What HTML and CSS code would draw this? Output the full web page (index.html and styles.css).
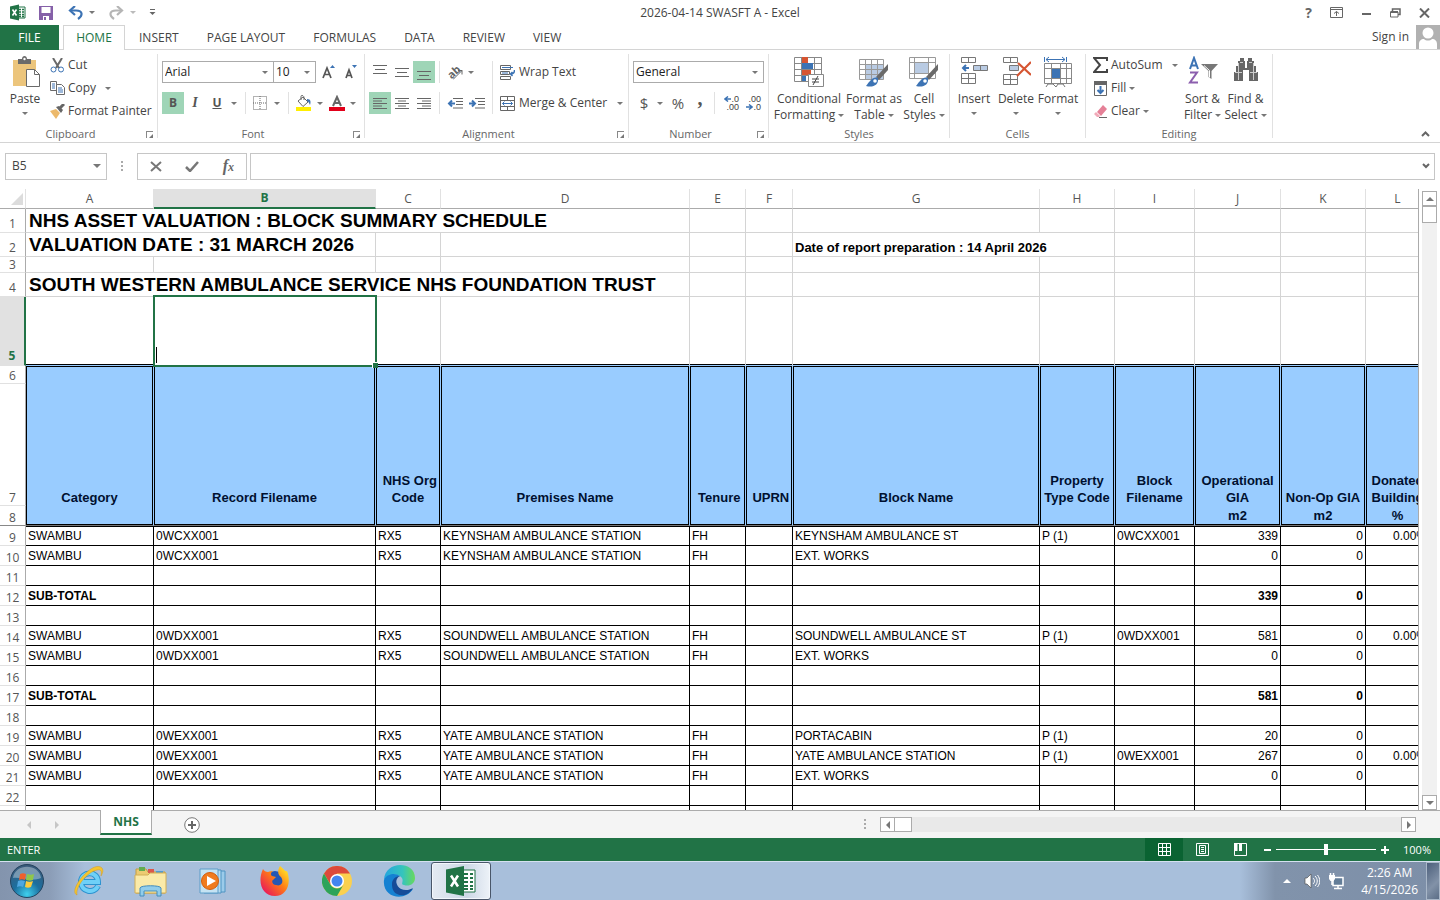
FILE: index.html
```html
<!DOCTYPE html>
<html lang="en">
<head>
<meta charset="utf-8">
<title>2026-04-14 SWASFT A - Excel</title>
<link rel="stylesheet" href="styles.css">
</head>
<body>
<header class="titlebar">
  <div class="quick">
    <svg width="18" height="17" viewBox="0 0 18 17"><path d="M8 3h8v11H8z" fill="#fff" stroke="#217346"/><path d="M10 5.500h2m1 0h2M10 8h2m1 0h2M10 10.500h2m1 0h2M10 12.500h2m1 0h2" stroke="#217346" stroke-width="1.300"/><path d="M1 2.500 10 .5v16L1 14.500z" fill="#217346"/><path d="m3.500 5.500 4 6m0-6-4 6" stroke="#fff" stroke-width="1.600"/></svg>
    <button class="tool" aria-label="Save"><svg width="16" height="16" viewBox="0 0 16 16"><path d="M1 1h14v14H1z" fill="#8560a8"/><path d="M3.500 2h9v6h-9zM5 11h6v4H5z" fill="#fff"/><path d="M6 12h2v3H6z" fill="#8560a8"/></svg></button>
    <button class="tool undo" aria-label="Undo"><svg width="17" height="14" viewBox="0 0 17 14"><path d="M3 4.500h5c7 0 7 5 2 8.500" fill="none" stroke="#3c73b4" stroke-width="2.200"/><path d="M7 0 2 4.500l5 4.500" fill="none" stroke="#3c73b4" stroke-width="2.200"/></svg><i class="caret"></i></button>
    <button class="tool redo" aria-label="Redo"><svg width="17" height="14" viewBox="0 0 17 14"><path d="M13 4.500H8c-7 0-7 5-2 8.500" fill="none" stroke="#b5b5b5" stroke-width="2.200"/><path d="m9 0 5 4.500L9 9" fill="none" stroke="#b5b5b5" stroke-width="2.200"/></svg><i class="caret pale"></i></button>
    <button class="tool more" aria-label="Customize Quick Access Toolbar"><svg width="7" height="7" viewBox="0 0 7 7"><path d="M1 .5h5" stroke="#666"/><path d="M.5 3h6l-3 3z" fill="#666"/></svg></button>
  </div>
  <h1>2026-04-14 SWASFT A - Excel</h1>
  <div class="winctl">
    <button class="tool help" aria-label="Help">?</button>
    <button class="tool" aria-label="Ribbon Display Options"><svg width="13" height="11" viewBox="0 0 13 11"><path d="M.5.5h12v10H.5zM1 2.500h11M6.500 9V4.500M4 6.500l2.500-2 2.500 2" fill="none" stroke="#666"/></svg></button>
    <button class="tool" aria-label="Minimize"><svg width="11" height="11" viewBox="0 0 11 11"><path d="M1 7h9" stroke="#666" stroke-width="2"/></svg></button>
    <button class="tool" aria-label="Restore"><svg width="11" height="10" viewBox="0 0 11 10"><path d="M2.500 3V1h7.500v5.500H8" fill="none" stroke="#666" stroke-width="1.500"/><path d="M.5 4h7.500v5H.5z" fill="#fff" stroke="#666"/><path d="M.5 4h7.500" stroke="#666" stroke-width="2"/></svg></button>
    <button class="tool" aria-label="Close"><svg width="11" height="10" viewBox="0 0 11 10"><path d="m1 .5 9 9m0-9-9 9" stroke="#666" stroke-width="2"/></svg></button>
  </div>
</header>

<nav class="tabs">
  <button class="file">FILE</button>
  <button class="current">HOME</button>
  <button>INSERT</button>
  <button>PAGE LAYOUT</button>
  <button>FORMULAS</button>
  <button>DATA</button>
  <button>REVIEW</button>
  <button>VIEW</button>
  <a class="signin" href="#">Sign in <svg width="24" height="24" viewBox="0 0 24 24"><path d="M0 0h24v24H0z" fill="#b1b1b1"/><circle cx="12" cy="8" r="5.500" fill="#fff"/><path d="M3 24v-5c0-3 2-5 5-5 2 2 6 2 8 0 3 0 5 2 5 5v5z" fill="#fff"/></svg></a>
</nav>

<section class="ribbon">
  <div class="group clipboard">
    <div class="body">
      <button class="big paste"><svg width="30" height="32" viewBox="0 0 30 32"><path d="M3 4h23v26H3z" fill="#ecc57c"/><path d="M8 3h4c0-4 5-4 5 0h4v5H8z" fill="#6a6a6a"/><circle cx="14.500" cy="3" r="1.200" fill="#fff"/><path d="M17.500 13.500h8l5 5v12h-13z" fill="#fff" stroke="#6a6a6a" transform="translate(-1 0)"/><path d="M24.500 13.500v5h5" fill="none" stroke="#6a6a6a"/></svg><span>Paste</span><i class="caret"></i></button>
      <div class="stack">
        <button class="small"><svg width="15" height="15" viewBox="0 0 15 15"><path d="m3 0 6 10M12 0 6 10" stroke="#6a6a6a" stroke-width="2"/><circle cx="3.500" cy="11.500" r="2.500" fill="none" stroke="#3c73b4"/><circle cx="11" cy="11.500" r="2.500" fill="none" stroke="#3c73b4"/></svg>Cut</button>
        <button class="small"><svg width="15" height="14" viewBox="0 0 15 14"><path d="M.5.5h6v9h-6z" fill="#fff" stroke="#6a6a6a"/><path d="M6.500 3.500h5l3 3v7h-8z" fill="#fff" stroke="#6a6a6a"/><path d="M2 3h3M2 5h3M2 7h3m3 0h4M8 9h5m-5 2h5" stroke="#3c73b4"/></svg>Copy<i class="caret far"></i></button>
        <button class="small"><svg width="15" height="15" viewBox="0 0 15 15"><path d="m0 7 6-2 4 4-4 6z" fill="#ecb96b"/><path d="m6 3 3-1 4 4-2 3z" fill="#666"/><path d="m10 4 4-4" stroke="#666" stroke-width="3"/></svg>Format Painter</button>
      </div>
    </div>
    <div class="label">Clipboard<i class="launch"></i></div>
  </div>

  <div class="group font">
    <div class="body rows">
      <div class="line">
        <span class="combo face"><select aria-label="Font"><option>Arial</option></select><i class="caret"></i></span><span class="combo size"><select aria-label="Font size"><option>10</option></select><i class="caret"></i></span>
        <button class="tool" aria-label="Increase font size"><svg width="14" height="14" viewBox="0 0 14 14"><path d="m1 13 4-10 4 10M2.500 9.500h5" fill="none" stroke="#555" stroke-width="1.700"/><path d="m8 3 2.500-3L13 3z" fill="#3c73b4"/></svg></button>
        <button class="tool shrink" aria-label="Decrease font size"><svg width="13" height="14" viewBox="0 0 13 14"><path d="m1 13 3-8 3 8M2 10.500h4" fill="none" stroke="#555" stroke-width="1.700"/><path d="m7 0 2.500 3L12 0z" fill="#3c73b4"/></svg></button>
      </div>
      <div class="line">
        <button class="sq on bold">B</button><button class="sq ital">I</button><button class="sq under">U</button><i class="caret"></i><i class="bar"></i>
        <button class="tool borders" aria-label="Borders"><svg width="14" height="14" viewBox="0 0 14 14"><path d="M.5.5h13v13H.5zM7 0v14M0 7h14" fill="none" stroke="#666" stroke-dasharray="1 1"/></svg></button><i class="caret"></i><i class="bar"></i>
        <button class="tool fillc" aria-label="Fill color"><svg width="17" height="17" viewBox="0 0 17 17"><path d="M1 12h15v4H1z" fill="#ffee00"/><path d="m3 6 5-4 5 5-5 4.500z" fill="#fff" stroke="#666"/><path d="M6 5V1.500c0-2 3-1 3 1V5" fill="none" stroke="#666"/><path d="M12 4c4 0 4 3 3 6-1-2-1-3-3-4z" fill="#3c73b4"/></svg></button><i class="caret"></i>
        <button class="tool fontc" aria-label="Font color"><svg width="16" height="17" viewBox="0 0 16 17"><path d="M0 12h16v4H0z" fill="#e2001a"/><path d="m4 11 4-9 4 9M5 8h6" fill="none" stroke="#666" stroke-width="2"/></svg></button><i class="caret"></i>
      </div>
    </div>
    <div class="label">Font<i class="launch"></i></div>
  </div>

  <div class="group align">
    <div class="body cols">
      <div class="rows">
        <div class="line">
          <button class="sq" aria-label="Top align"><svg width="14" height="15" viewBox="0 0 14 15"><path d="M0 .5h14M2 4.500h10M0 8.500h14" stroke="#666"/></svg></button><button class="sq" aria-label="Middle align"><svg width="14" height="15" viewBox="0 0 14 15"><path d="M0 3.500h14M2 7.500h10M0 11.500h14" stroke="#666"/></svg></button><button class="sq on" aria-label="Bottom align"><svg width="14" height="15" viewBox="0 0 14 15"><path d="M0 6.500h14M2 10.500h10M0 14.500h14" stroke="#666"/></svg></button><i class="bar"></i><button class="tool orient" aria-label="Orientation"><span class="ab">ab</span><svg width="10" height="10" viewBox="0 0 10 10"><path d="M0 9.500 9 .5m-4 0h4v4" fill="none" stroke="#666"/></svg></button><i class="caret"></i>
        </div>
        <div class="line">
          <button class="sq on" aria-label="Align left"><svg width="14" height="11" viewBox="0 0 14 11"><path d="M0 .5h14M0 3h9M0 5.500h14M0 8h9M0 10.500h14" stroke="#666"/></svg></button><button class="sq" aria-label="Center"><svg width="14" height="11" viewBox="0 0 14 11"><path d="M0 .5h14M3 3h8M0 5.500h14M3 8h8M0 10.500h14" stroke="#666"/></svg></button><button class="sq" aria-label="Align right"><svg width="14" height="11" viewBox="0 0 14 11"><path d="M0 .5h14M5 3h9M0 5.500h14M5 8h9M0 10.500h14" stroke="#666"/></svg></button><i class="bar"></i><button class="sq" aria-label="Decrease indent"><svg width="16" height="11" viewBox="0 0 16 11"><path d="M6 .5h10M9 3.500h7M9 6.500h7M6 10h10" stroke="#666"/><path d="M8 5.500H2m3-3-3 3 3 3" fill="none" stroke="#3c73b4" stroke-width="2"/></svg></button><button class="sq" aria-label="Increase indent"><svg width="16" height="11" viewBox="0 0 16 11"><path d="M6 .5h10M9 3.500h7M9 6.500h7M6 10h10" stroke="#666"/><path d="M0 5.500h6m-3-3 3 3-3 3" fill="none" stroke="#3c73b4" stroke-width="2"/></svg></button>
        </div>
      </div>
      <div class="rows wraps">
        <div class="line"><button class="small"><svg width="15" height="15" viewBox="0 0 15 15"><path d="M.5.500h10v4H.5zM.5 6.500h9v3H.5zM.5 11.500h10v3H.5z" fill="#fff" stroke="#666"/><path d="M2 2.500h11M2 8h6" stroke="#3c73b4"/><path d="M14.500 5c0 3-1 4-4 4m2-2-2 2 2 2" fill="none" stroke="#3c73b4" stroke-width="1.500"/></svg>Wrap Text</button></div>
        <div class="line"><button class="small"><svg width="15" height="15" viewBox="0 0 15 15"><path d="M.5.500h14v14H.5zM.5 4.500h14M.5 10.500h14M7.500 0v4.500m0 6v4.500" fill="#fff" stroke="#666"/><path d="M2.500 7.500h10m-8-2-2 2 2 2m6-4 2 2-2 2" fill="none" stroke="#3c73b4"/></svg>Merge &amp; Center<i class="caret far"></i></button></div>
      </div>
    </div>
    <div class="label">Alignment<i class="launch"></i></div>
  </div>

  <div class="group number">
    <div class="body rows">
      <div class="line"><span class="combo general"><select aria-label="Number format"><option>General</option></select><i class="caret"></i></span></div>
      <div class="line"><button class="sq sym">$</button><i class="caret"></i><button class="sq sym">%</button><button class="sq comma">,</button><i class="bar"></i><button class="sq dec" aria-label="Increase decimal"><span><svg width="7" height="6" viewBox="0 0 7 6"><path d="M1 3h6M4 .5 1 3l3 2.500" fill="none" stroke="#3c73b4" stroke-width="1.500"/></svg>.0</span><span>.00</span></button><button class="sq dec" aria-label="Decrease decimal"><span>.00</span><span><svg width="7" height="6" viewBox="0 0 7 6"><path d="M0 3h6M3 .5 6 3 3 5.500" fill="none" stroke="#3c73b4" stroke-width="1.500"/></svg>.0</span></button></div>
    </div>
    <div class="label">Number<i class="launch"></i></div>
  </div>

  <div class="group styles">
    <div class="body">
      <button class="big w1"><svg width="30" height="32" viewBox="0 0 30 32"><path d="M.5 1.500h27v24H.5zM.5 7.500h27M.5 13.500h27M.5 19.500h27M7.500 1v24M20.500 1v24" fill="#fff" stroke="#888"/><path d="M8 1h6v6H8zM8 14h9v5H8z" fill="#d65532"/><path d="M8 7h11v6H8zM8 20h4v5H8z" fill="#3c73b4"/><path d="M14.500 18.500h15v12h-15z" fill="#fff" stroke="#888"/><path d="M18 23h7m-7 3h7m-1-6-5 9" stroke="#444"/></svg><span>Conditional<br>Formatting<i class="caret"></i></span></button>
      <button class="big w2"><svg width="30" height="32" viewBox="0 0 30 32"><path d="M.5 3.500h24v20H.5z" fill="#fff"/><path d="M7 9h18v14H7z" fill="#b9cbe3"/><path d="M.5 3.500h24v20H.5zM.5 8.500h24M.5 13.500h24M.5 18.500h24M6.500 3v20M12.500 3v20M18.500 3v20" fill="none" stroke="#999"/><path d="M29 8v6l-9 10-3-3z" fill="#6a6a6a"/><path d="M19 22c-5-2-8 3-12 8 7 2 13-1 12-8z" fill="#3c73b4"/><circle cx="16" cy="25" r="1.800" fill="#fff"/></svg><span>Format as<br>Table<i class="caret"></i></span></button>
      <button class="big w3"><svg width="30" height="32" viewBox="0 0 30 32"><path d="M.5 1.500h26v21H.5zM.5 6.500h26M.5 17.500h26M5.500 1v21M19.500 1v21" fill="#fff" stroke="#999"/><path d="M6 7h13v10H6z" fill="#b9cbe3"/><path d="M29 8v6l-9 10-3-3z" fill="#6a6a6a"/><path d="M19 22c-5-2-8 3-12 8 7 2 13-1 12-8z" fill="#3c73b4"/><circle cx="16" cy="25" r="1.800" fill="#fff"/></svg><span>Cell<br>Styles<i class="caret"></i></span></button>
    </div>
    <div class="label">Styles</div>
  </div>

  <div class="group cells">
    <div class="body">
      <button class="big"><svg width="30" height="32" viewBox="0 0 30 32"><path d="M2.500 1.500h14v5h-14zM9.500 1v5M2.500 17.500h14v10h-14zM9.500 17v10M2.500 22.500h14" fill="none" stroke="#777"/><path d="M14.500 9.500h14v5h-14zM21.500 9v5" fill="#b9cbe3" stroke="#777"/><path d="M10 12H4m3-3-3 3 3 3" fill="none" stroke="#3c73b4" stroke-width="2"/></svg><span>Insert</span><i class="caret"></i></button>
      <button class="big"><svg width="30" height="32" viewBox="0 0 30 32"><path d="M2.500 1.500h14v5h-14zM9.500 1v5M2.500 18.500h14v10h-14zM9.500 18v10M2.500 23.500h14" fill="none" stroke="#777"/><path d="M8.500 9.500h9v5h-9z" fill="#b9cbe3" stroke="#777"/><path d="m17 7 13 12M30 6 16 20" stroke="#d65532" stroke-width="2.200"/></svg><span>Delete</span><i class="caret"></i></button>
      <button class="big"><svg width="30" height="32" viewBox="0 0 30 32"><path d="M1.500 7.500h27v20h-27zM1.500 12.500h27M1.500 22.500h27M8.500 7v20M17.500 7v20M23.500 7v20" fill="#fff" stroke="#888"/><path d="M9 13h8v9H9z" fill="#3c73b4"/><path d="M1.500 1v5M23.500 1v5M3 3.500h19M6 1 3 3.500 6 6m13-5 3 2.500L19 6" fill="none" stroke="#3c73b4"/><path d="m3 31 2-3h5l3 3 2-3h5l2 3" fill="#fff" stroke="#777"/></svg><span>Format</span><i class="caret"></i></button>
    </div>
    <div class="label">Cells</div>
  </div>

  <div class="group editing">
    <div class="body">
      <div class="stack">
        <button class="small"><svg width="15" height="16" viewBox="0 0 15 16"><path d="M14 4V1H1l6 7-6 7h13v-3" fill="none" stroke="#444" stroke-width="2"/></svg>AutoSum<i class="caret far"></i></button>
        <button class="small"><svg width="15" height="15" viewBox="0 0 15 15"><path d="M1.500.5h12v14h-12z" fill="#fff" stroke="#666"/><path d="M1 0h13v4H1z" fill="#666"/><path d="M7.500 5v7m-3-3 3 3 3-3" fill="none" stroke="#3c73b4" stroke-width="2"/></svg>Fill<i class="caret"></i></button>
        <button class="small"><svg width="15" height="13" viewBox="0 0 15 13"><path d="m4 7 6-7 4 4-6 7z" fill="#e58097"/><path d="m1 9 2-2 4 4-1 1H4z" fill="#f1a9b8"/><path d="M6 12.500h8" stroke="#666"/></svg>Clear<i class="caret"></i></button>
      </div>
      <button class="big w4"><svg width="30" height="32" viewBox="0 0 30 32"><path d="m2 13 4-11 4 11M3.500 9.500h5" fill="none" stroke="#3c73b4" stroke-width="2"/><path d="M2 16.500h7l-7 10h8" fill="none" stroke="#8c5fae" stroke-width="2"/><path d="M13 8h17l-6.500 7v8l-3-2v-6z" fill="#777"/><path d="m16 9.500 5.500 5v7" fill="none" stroke="#fff"/></svg><span>Sort &amp;<br>Filter<i class="caret"></i></span></button>
      <button class="big w4"><svg width="28" height="32" viewBox="0 0 28 32"><path d="M8 2h4v3h1v7h2V5h1V2h4v3h2v5h2v6h2v9h-9V14h-6v11H2v-9h2v-6h2V5h2z" fill="#666"/><path d="M6.500 7v17M21.500 7v17M8 6.500h3M17 6.500h3M3 16.500h7m8 0h7" stroke="#ccc"/></svg><span>Find &amp;<br>Select<i class="caret"></i></span></button>
    </div>
    <div class="label">Editing</div>
  </div>
  <button class="tool collapse" aria-label="Collapse the Ribbon"><svg width="9" height="6" viewBox="0 0 9 6"><path d="m1 5 3.500-3.500L8 5" fill="none" stroke="#666" stroke-width="2"/></svg></button>
</section>

<section class="formula">
  <span class="namebox"><input aria-label="Name box" value="B5"><i class="caret"></i></span>
  <i class="dots"></i>
  <div class="fx">
    <button class="tool" aria-label="Cancel"><svg width="12" height="11" viewBox="0 0 12 11"><path d="m1 1 10 9M11 1 1 10" stroke="#777" stroke-width="2"/></svg></button>
    <button class="tool" aria-label="Enter"><svg width="14" height="11" viewBox="0 0 14 11"><path d="m1 6 4 4 8-9" fill="none" stroke="#777" stroke-width="2.500"/></svg></button>
    <button class="tool fn" aria-label="Insert function">f<small>x</small></button>
  </div>
  <span class="entry"><input aria-label="Formula bar"><svg width="8" height="6" viewBox="0 0 8 6"><path d="m1 1 3 3 3-3" fill="none" stroke="#666" stroke-width="2"/></svg></span>
</section>

<main class="work">
  <div class="pane">
    <table class="sheet">
      <colgroup><col class="cn"><col class="ca"><col class="cb"><col class="cc"><col class="cd"><col class="ce"><col class="cf"><col class="cg"><col class="ch"><col class="ci"><col class="cj"><col class="ck"><col class="cl"></colgroup>
      <thead>
        <tr class="letters"><th class="corner"><svg width="12" height="12" viewBox="0 0 12 12"><path d="M12 0v12H0z" fill="#dcdcdc"/></svg></th><th>A</th><th class="sel">B</th><th>C</th><th>D</th><th>E</th><th>F</th><th>G</th><th>H</th><th>I</th><th>J</th><th>K</th><th>L</th></tr>
      </thead>
      <tbody class="top">
        <tr class="h24"><th>1</th><td colspan="4" class="title">NHS ASSET VALUATION : BLOCK SUMMARY SCHEDULE</td><td></td><td></td><td></td><td></td><td></td><td></td><td></td><td></td></tr>
        <tr class="h24"><th>2</th><td colspan="2" class="title">VALUATION DATE : 31 MARCH 2026</td><td></td><td></td><td></td><td></td><td colspan="2" class="prepared">Date of report preparation : 14 April 2026</td><td></td><td></td><td></td><td></td></tr>
        <tr class="h16"><th>3</th><td></td><td></td><td></td><td></td><td></td><td></td><td></td><td></td><td></td><td></td><td></td><td></td></tr>
        <tr class="h24"><th>4</th><td colspan="4" class="title">SOUTH WESTERN AMBULANCE SERVICE NHS FOUNDATION TRUST</td><td></td><td></td><td></td><td></td><td></td><td></td><td></td><td></td></tr>
        <tr class="h69"><th class="sel">5</th><td></td><td class="active"><div class="cursor"></div></td><td></td><td></td><td></td><td></td><td></td><td></td><td></td><td></td><td></td><td></td></tr>
      </tbody>
      <tbody class="heads">
        <tr class="h18"><th>6</th><td></td><td></td><td></td><td></td><td></td><td></td><td></td><td></td><td></td><td></td><td></td><td></td></tr>
        <tr class="h122"><th>7</th><td>Category</td><td>Record Filename</td><td>&nbsp;NHS Org Code</td><td>Premises Name</td><td>&nbsp;Tenure</td><td>&nbsp;UPRN</td><td>Block Name</td><td>Property Type&nbsp;Code</td><td>Block Filename</td><td>Operational GIA</td><td>Non-Op GIA</td><td>Donated Building</td></tr>
        <tr class="h20"><th>8</th><td></td><td></td><td></td><td></td><td></td><td></td><td></td><td></td><td></td><td>m2</td><td>m2</td><td>%</td></tr>
      </tbody>
      <tbody class="data">
        <tr><th>9</th><td>SWAMBU</td><td>0WCXX001</td><td>RX5</td><td>KEYNSHAM AMBULANCE STATION</td><td>FH</td><td></td><td>KEYNSHAM AMBULANCE ST</td><td>P (1)</td><td>0WCXX001</td><td>339</td><td>0</td><td>0.00%</td></tr>
        <tr><th>10</th><td>SWAMBU</td><td>0WCXX001</td><td>RX5</td><td>KEYNSHAM AMBULANCE STATION</td><td>FH</td><td></td><td>EXT. WORKS</td><td></td><td></td><td>0</td><td>0</td><td></td></tr>
        <tr><th>11</th><td></td><td></td><td></td><td></td><td></td><td></td><td></td><td></td><td></td><td></td><td></td><td></td></tr>
        <tr class="sub"><th>12</th><td>SUB-TOTAL</td><td></td><td></td><td></td><td></td><td></td><td></td><td></td><td></td><td>339</td><td>0</td><td></td></tr>
        <tr><th>13</th><td></td><td></td><td></td><td></td><td></td><td></td><td></td><td></td><td></td><td></td><td></td><td></td></tr>
        <tr><th>14</th><td>SWAMBU</td><td>0WDXX001</td><td>RX5</td><td>SOUNDWELL AMBULANCE STATION</td><td>FH</td><td></td><td>SOUNDWELL AMBULANCE ST</td><td>P (1)</td><td>0WDXX001</td><td>581</td><td>0</td><td>0.00%</td></tr>
        <tr><th>15</th><td>SWAMBU</td><td>0WDXX001</td><td>RX5</td><td>SOUNDWELL AMBULANCE STATION</td><td>FH</td><td></td><td>EXT. WORKS</td><td></td><td></td><td>0</td><td>0</td><td></td></tr>
        <tr><th>16</th><td></td><td></td><td></td><td></td><td></td><td></td><td></td><td></td><td></td><td></td><td></td><td></td></tr>
        <tr class="sub"><th>17</th><td>SUB-TOTAL</td><td></td><td></td><td></td><td></td><td></td><td></td><td></td><td></td><td>581</td><td>0</td><td></td></tr>
        <tr><th>18</th><td></td><td></td><td></td><td></td><td></td><td></td><td></td><td></td><td></td><td></td><td></td><td></td></tr>
        <tr><th>19</th><td>SWAMBU</td><td>0WEXX001</td><td>RX5</td><td>YATE AMBULANCE STATION</td><td>FH</td><td></td><td>PORTACABIN</td><td>P (1)</td><td></td><td>20</td><td>0</td><td></td></tr>
        <tr><th>20</th><td>SWAMBU</td><td>0WEXX001</td><td>RX5</td><td>YATE AMBULANCE STATION</td><td>FH</td><td></td><td>YATE AMBULANCE STATION</td><td>P (1)</td><td>0WEXX001</td><td>267</td><td>0</td><td>0.00%</td></tr>
        <tr><th>21</th><td>SWAMBU</td><td>0WEXX001</td><td>RX5</td><td>YATE AMBULANCE STATION</td><td>FH</td><td></td><td>EXT. WORKS</td><td></td><td></td><td>0</td><td>0</td><td></td></tr>
        <tr><th>22</th><td></td><td></td><td></td><td></td><td></td><td></td><td></td><td></td><td></td><td></td><td></td><td></td></tr>
        <tr><th></th><td></td><td></td><td></td><td></td><td></td><td></td><td></td><td></td><td></td><td></td><td></td><td></td></tr>
      </tbody>
    </table>
  </div>
  <div class="vscroll">
    <button class="arrow" aria-label="Scroll up"><i class="tri up"></i></button>
    <div class="thumb"></div>
    <button class="arrow end" aria-label="Scroll down"><i class="tri down"></i></button>
  </div>
</main>

<footer class="sheetbar">
  <button class="tool nav" aria-label="Previous sheet"><i class="tri left pale"></i></button>
  <button class="tool nav" aria-label="Next sheet"><i class="tri right pale"></i></button>
  <button class="sheettab">NHS</button>
  <button class="tool add" aria-label="New sheet"><svg width="16" height="16" viewBox="0 0 16 16"><circle cx="8" cy="8" r="7.300" fill="#fff" stroke="#777"/><path d="M8 4v8M4 8h8" stroke="#666" stroke-width="2"/></svg></button>
  <div class="hside"><i class="dots"></i>
    <div class="hscroll"><button class="arrow" aria-label="Scroll left"><i class="tri left"></i></button><div class="thumb"></div><button class="arrow end" aria-label="Scroll right"><i class="tri right"></i></button></div>
  </div>
</footer>

<div class="status">
  <span>ENTER</span>
  <div class="views">
    <button class="view on" aria-label="Normal"><svg width="13" height="13" viewBox="0 0 13 13"><path d="M.5.500h12v12H.5zM4.500 0v13M8.500 0v13M0 4.500h13M0 8.500h13" fill="none" stroke="#fff"/></svg></button>
    <button class="view" aria-label="Page Layout"><svg width="13" height="13" viewBox="0 0 13 13"><path d="M.5.500h12v12H.5zM3.500 2.500h6v8h-6zM5 4.500h3M5 6.500h3M5 8.500h3" fill="none" stroke="#fff"/></svg></button>
    <button class="view" aria-label="Page Break Preview"><svg width="13" height="13" viewBox="0 0 13 13"><path d="M.5.500h12v12H.5z" fill="none" stroke="#fff"/><path d="M0 0h3.500v8H0zM5 0h3v8H5z" fill="#fff"/></svg></button>
    <button class="zoom" aria-label="Zoom out"><svg width="7" height="8" viewBox="0 0 7 8"><path d="M0 4h7" stroke="#fff" stroke-width="2"/></svg></button>
    <input class="slider" type="range" min="0" max="100" value="50" aria-label="Zoom">
    <button class="zoom" aria-label="Zoom in"><svg width="8" height="8" viewBox="0 0 8 8"><path d="M0 4h8M4 0v8" stroke="#fff" stroke-width="2"/></svg></button>
    <span class="percent">100%</span>
  </div>
</div>

<div class="taskbar">
  <button class="start" aria-label="Start"><svg width="36" height="36" viewBox="0 0 36 36"><defs><radialGradient id="orb" cx=".5" cy=".9" r=".9"><stop offset="0" stop-color="#3fd0ee"/><stop offset=".45" stop-color="#1c6f9f"/><stop offset="1" stop-color="#3c5978"/></radialGradient></defs><circle cx="18" cy="18" r="16.500" fill="url(#orb)" stroke="#24435f"/><path d="M4 15C6 0 30 0 32 15c-9 4-19-1-28 0z" fill="#fff" opacity=".35"/><path d="M11 11c2-1 4-1 6 0l-1 6c-2-1-4-1-6 0z" fill="#f0602c"/><path d="M18 11c3 1 5 1 7 0l-1 6c-2 1-4 1-7 0z" fill="#8fc74a"/><path d="M9 18c2-1 4-1 7 0l-2 6c-2-1-4-1-6 0z" fill="#4fa7e0"/><path d="M17 18c2 1 5 1 7 0l-2 6c-2 1-4 1-6 0z" fill="#fccb3d"/></svg></button>
  <button class="app" aria-label="Internet Explorer"><svg width="32" height="32" viewBox="0 0 32 32"><path d="M25 21c-4 8-17 6-17-4 0-11 17-12 17 0H10" fill="none" stroke="#2c93d0" stroke-width="6"/><path d="M25 21c-4 8-17 6-17-4 0-11 17-12 17 0H10" fill="none" stroke="#6fd0f7" stroke-width="4"/><path d="M4 30C-6 26 20-6 29 3c2 3 0 6-1 8 1-5 0-7-4-6C14 7 2 22 4 30z" fill="#f5c52f" stroke="#d79a16" stroke-width=".5"/></svg></button>
  <button class="app" aria-label="File Explorer"><svg width="34" height="32" viewBox="0 0 34 32"><path d="M2 4h10l2 3h17v21H2z" fill="#eccb72" stroke="#c49d40"/><path d="M5 2h6v4H5z" fill="#61ac50"/><path d="M14 4h6v4h-6z" fill="#db574d"/><path d="M22 6h7v4h-7z" fill="#519bd1"/><path d="M1 10h13l2-2h16v20H1z" fill="#faeaa9" stroke="#d2ae56"/><path d="M6 31v-8c0-3 21-3 21 0v8h-4v-5H10v5z" fill="#91cdeb" stroke="#448dbd"/></svg></button>
  <button class="app" aria-label="Media Player"><svg width="30" height="28" viewBox="0 0 30 28"><path d="M10 4h17v21H10z" fill="#9bcbea" stroke="#4f94c2"/><path d="M6 3h17v23H6z" fill="#b7dbf0" stroke="#4f94c2"/><path d="M2 2h18v24H2z" fill="#c5e3f3" stroke="#5c9dc8"/><circle cx="12" cy="14" r="8.500" fill="#f07b1e" stroke="#d35e0c"/><path d="m9 9 9 5-9 5z" fill="#fff"/></svg></button>
  <button class="app" aria-label="Firefox"><svg width="32" height="32" viewBox="0 0 32 32"><defs><linearGradient id="fox" x1="1" y1="0" x2="0" y2="1"><stop offset=".1" stop-color="#ffe226"/><stop offset=".45" stop-color="#ff7b16"/><stop offset=".9" stop-color="#e8145d"/></linearGradient></defs><circle cx="16" cy="16" r="10" fill="#2457b4"/><path d="M4 4c1 2 3 3 5 3 2-1 4-1 5-1-3 2-2 4-1 5l4 1-3 3c-2 1 0 5 3 5 6 2 8-4 5-8-3-2-4-6-1-11 4 3 5 6 7 5 5 13-1 25-12 25C3 31-2 17 4 4z" fill="url(#fox)"/></svg></button>
  <button class="app" aria-label="Chrome"><svg width="30" height="30" viewBox="0 0 30 30"><circle cx="15" cy="15" r="15" fill="#fbd04f"/><path d="M2 7.500A15 15 0 0 1 28 7.500H15l-6.500 11z" fill="#dc493b"/><path d="M2 7.500A15 15 0 0 0 15 30l6.500-11.200c-3 5-10 5-13 0z" fill="#2ca35a"/><circle cx="15" cy="15" r="7" fill="#fff"/><circle cx="15" cy="15" r="5.500" fill="#4484f0"/></svg></button>
  <button class="app" aria-label="Edge"><svg width="33" height="32" viewBox="0 0 33 32"><defs><linearGradient id="edge" x1="0" x2="1"><stop offset="0" stop-color="#23a5df"/><stop offset=".6" stop-color="#35c4bd"/><stop offset="1" stop-color="#68d95c"/></linearGradient></defs><path d="M1 15C2-5 32-4 32 13c0 6-6 9-11 7-4-1 0-3-2-7-4-6-15-4-18 2z" fill="url(#edge)"/><path d="M1 15c2-6 11-8 16-4-6 1-6 8-2 12 4 3 9 3 15 1-8 13-31 9-29-9z" fill="#1581d2"/><path d="M9 19c0-4 3-8 8-8-6 3-4 10 1 13 4 2 9 1 12-1-4 7-11 9-16 6-4-2-5-6-5-10z" fill="#164c98"/></svg></button>
  <button class="app running" aria-label="Excel"><svg width="30" height="30" viewBox="0 0 30 30"><path d="M14 4h15v22H14z" fill="#fff" stroke="#217346"/><path d="M18 8h4m2 0h3M18 12h4m2 0h3m-9 4h4m2 0h3m-9 4h4m2 0h3m-9 3h4m2 0h3" stroke="#217346" stroke-width="2"/><path d="M0 3.500 18 0v30L0 26.500z" fill="#217346"/><path d="m5 9.500 7 11m0-11-7 11" stroke="#fff" stroke-width="2.500"/></svg></button>
  <div class="tray">
    <i class="tri up light"></i>
    <svg width="16" height="16" viewBox="0 0 16 16"><path d="M1 5h2l4-4v14l-4-4H1z" fill="#fff" stroke="#555" stroke-width=".7"/><path d="M9 5c2 2 2 4 0 6M11 3c3 3 3 7 0 10M13.500 2c3 4 3 8 0 12" fill="none" stroke="#fff"/></svg>
    <svg width="16" height="17" viewBox="0 0 16 17"><path d="M4 4.500h10v8H4z" fill="#637d98" stroke="#fff" stroke-width="1.500"/><path d="M9 13v2M5 15.500h8" stroke="#fff" stroke-width="1.500"/><path d="M0 2h6v4L4.500 8h-3L0 6z" fill="#fff"/><path d="M1.500 0v3m3-3v3M3 8v4" stroke="#fff" stroke-width="1.500"/></svg>
    <time class="clock">2:26 AM<br>4/15/2026</time>
    <button class="peek" aria-label="Show desktop"></button>
  </div>
</div>
</body>
</html>
```
FILE: styles.css
```css
* { box-sizing: border-box; }
html, body { height: 100%; }
body {
  margin: 0;
  display: flex;
  flex-direction: column;
  min-width: 1300px;
  overflow: hidden;
  background: #fff;
  color: #444;
  font: 12px/16px "Open Sans", "Noto Sans", sans-serif;
}
button, input, select { font: inherit; color: inherit; }
button { padding: 0; border: 0; background: none; white-space: nowrap; }
svg { display: block; flex: none; }
.tool { display: flex; align-items: center; justify-content: center; }

.caret { flex: none; display: inline-block; border: 3px solid transparent; border-top-color: #777; border-bottom: 0; }
.caret.pale { border-top-color: #bbb; }
.caret.far { margin-left: 6px; }
.tri { display: block; width: 0; height: 0; border: 4px solid transparent; }
.tri.up { border-bottom-color: #777; border-top: 0; }
.tri.down { border-top-color: #777; border-bottom: 0; }
.tri.left { border-right-color: #777; border-left: 0; }
.tri.right { border-left-color: #777; border-right: 0; }
.tri.left.pale { border-right-color: #c6c6c6; }
.tri.right.pale { border-left-color: #c6c6c6; }
.tri.light { border-bottom-color: #fff; }
.dots { width: 2px; height: 11px; background: repeating-linear-gradient(#aaa 0 2px, transparent 2px 4px); }

/* Title bar */
.titlebar { flex: none; height: 25px; display: grid; grid-template-columns: 1fr auto 1fr; align-items: center; }
.titlebar h1 { margin: 0; font-size: 12px; font-weight: 400; }
.quick { display: flex; align-items: center; padding-left: 9px; gap: 11px; height: 22px; }
.quick .undo { margin-left: 3px; gap: 4px; }
.quick .redo { gap: 5px; margin-left: 2px; }
.quick .more { margin-left: 2px; }
.winctl { display: flex; justify-content: flex-end; align-items: center; height: 22px; gap: 18px; padding-right: 10px; }
.help { font-size: 14px; font-weight: 700; color: #666; }

/* Tabs */
.tabs { flex: none; display: flex; height: 25px; border-bottom: 1px solid #d4d4d4; }
.tabs button { padding: 1px 14px 0; height: 24px; }
.tabs .file { width: 59px; height: 25px; background: #217346; color: #fff; }
.tabs .current { height: 25px; width: 62px; margin-left: 4px; padding: 0; border: 1px solid #d4d4d4; border-bottom: 0; background: #fff; color: #217346; }
.signin { margin-left: auto; display: flex; align-items: center; gap: 7px; color: #444; text-decoration: none; }

/* Ribbon */
.ribbon { flex: none; display: flex; height: 93px; padding: 4px 0; border-bottom: 1px solid #d4d4d4; }
.group { flex: none; display: flex; flex-direction: column; border-right: 1px solid #e1e1e1; }
.body { flex: 1; display: flex; padding-top: 1px; }
.label { display: flex; justify-content: center; position: relative; height: 16px; margin-bottom: -4px; padding-right: 16px; font-size: 11px; color: #666; }
.launch { position: absolute; right: 4px; top: 5px; width: 7px; height: 7px; border: solid #888; border-width: 1px 0 0 1px; }
.launch::after { content: ""; position: absolute; right: 0; bottom: 0; border: 2px solid #777; border-top-color: transparent; border-left-color: transparent; }
.clipboard { width: 158px; }
.font { width: 207px; }
.align { width: 264px; }
.number { width: 140px; }
.styles { width: 181px; }
.cells { width: 136px; }
.editing { width: 187px; }
.styles .label, .cells .label, .editing .label { padding-right: 0; }

.big { display: flex; flex-direction: column; align-items: center; padding-top: 1px; }
.big svg { margin-bottom: 3px; }
.big .caret { margin-top: 5px; }
.big span .caret { margin: 0 0 2px 3px; }
.paste { width: 50px; }
.stack { display: flex; flex-direction: column; gap: 3px; }
.small { display: flex; align-items: center; gap: 4px; height: 20px; }
.stack .small { gap: 3px; }
.styles .w1 { width: 80px; }
.styles .w2 { width: 50px; }
.styles .w3 { width: 50px; }
.cells .body { padding-left: 3px; }
.cells .big { width: 42px; }
.editing .body { padding-left: 7px; }
.editing .stack { width: 88px; }
.editing .stack .small .far { margin-left: 6px; }
.w4 { width: 43px; }

.rows { display: flex; flex-direction: column; gap: 9px; }
.body.rows, .body.cols { padding: 7px 0 0 4px; }
.line { display: flex; align-items: center; height: 22px; }
.combo { display: flex; align-items: center; height: 22px; border: 1px solid #ababab; padding-right: 5px; }
.combo + .combo { margin-left: -1px; }
.combo select { flex: 1; min-width: 0; appearance: none; border: 0; background: none; padding: 0 2px; outline: 0; color: #222; }
.face { width: 112px; }
.size { width: 43px; }
.general { width: 131px; }
.line .tool { margin-left: 6px; }
.line .shrink { margin-left: 9px; }
.sq { width: 22px; height: 22px; display: flex; align-items: center; justify-content: center; color: #555; }
.sq.on { background: #9fd5b7; }
.bar { flex: none; width: 1px; height: 22px; margin: 0 4px; background: #e1e1e1; }
.bold, .under { font-weight: 700; }
.ital { font: italic 700 14px "Liberation Serif", serif; }
.under { text-decoration: underline; }
.under + .caret { margin: 0 4px 0 3px; }
.font .line .borders { margin: 0 7px 0 3px; }
.font .borders + .caret { margin-right: 4px; }
.font .line .fillc { margin: 0 5px 0 2px; }
.font .line .fontc { margin: 0 5px 0 6px; }
.line .orient { margin: 0 5px 0 3px; }
.orient svg { margin: 6px 0 0 -8px; }
.ab { font-size: 11px; line-height: 12px; font-weight: 700; color: #666; transform: rotate(-42deg); }
.wraps { border-left: 1px solid #e1e1e1; margin-left: 3px; padding-left: 7px; height: 53px; }
.align .rows:first-child { width: 120px; }
.sym { font-size: 15px; }
.comma { font: 700 20px/10px "Liberation Serif", serif; padding-bottom: 10px; }
.number .caret { margin: 0 4px 0 2px; }
.number .combo .caret { margin: 0; }
.number .bar { margin: 0 5px 0 3px; }
.dec { flex-direction: column; align-items: flex-end; padding-right: 3px; font: 9px/8px "Liberation Sans", sans-serif; color: #444; }
.dec span { display: flex; align-items: center; }
.collapse { margin: auto 10px 1px auto; }

/* Formula bar */
.formula { flex: none; display: flex; align-items: center; height: 46px; padding: 0 5px; }
.namebox, .fx, .entry { display: flex; align-items: center; height: 27px; border: 1px solid #c6c6c6; }
.namebox { width: 102px; padding-right: 5px; }
.namebox .caret { border-width: 4px 4px 0; }
.formula input { flex: 1; min-width: 0; border: 0; padding: 0 6px; outline: 0; background: none; }
.formula .dots { margin: 0 14px; }
.fx { width: 110px; justify-content: space-between; padding: 0 12px; margin-right: 3px; }
.fn { font: italic 700 16px "Liberation Serif", serif; color: #666; }
.fn small { font-size: 12px; align-self: flex-end; }
.entry { flex: 1; padding-right: 4px; }

/* Worksheet */
.work { flex: 1; min-height: 0; display: flex; border-bottom: 1px solid #ababab; }
.pane { flex: 1; min-width: 0; overflow: hidden; border-right: 1px solid #ababab; }
.sheet { table-layout: fixed; width: 1430px; border-spacing: 0; font: 12px/14px "Liberation Sans", Arial, sans-serif; color: #000; }
.cn { width: 26px; }
.ca { width: 128px; }
.cb { width: 222px; }
.cc { width: 65px; }
.cd { width: 249px; }
.ce { width: 56px; }
.cf { width: 47px; }
.cg { width: 247px; }
.ch { width: 75px; }
.ci { width: 80px; }
.cj { width: 86px; }
.ck { width: 85px; }
.cl { width: 64px; }
.sheet th { padding: 0; font: 12px/14px "Open Sans", "Noto Sans", sans-serif; color: #555; vertical-align: bottom; border: solid #e1e1e1; border-width: 0 1px 1px 0; }
.sheet tbody th { border-right-color: #ababab; }
.letters { height: 20px; }
.sheet .letters th { border-bottom-color: #ababab; vertical-align: middle; }
.corner svg { margin-left: 11px; }
.sheet .sel { background: #e1e1e1; color: #217346; font-weight: 700; }
.sheet .letters .sel { border-bottom: 2px solid #217346; }
.sheet tbody .sel { border-right: 2px solid #217346; padding-bottom: 2px; }
.h16 { height: 16px; }
.h18 { height: 18px; }
.h20 { height: 20px; }
.h24 { height: 24px; }
.h69 { height: 69px; }
.h122 { height: 122px; }
.sheet .h24 th { padding-bottom: 1px; }
.sheet td { padding: 0 2px; border: solid #d4d4d4; border-width: 0 1px 1px 0; white-space: nowrap; }
.sheet .title { font-size: 19px; line-height: 22px; font-weight: 700; padding: 1px 3px 0; }
.sheet .prepared { font-size: 13px; font-weight: 700; vertical-align: bottom; padding-bottom: 1px; }
.h69 td { border-bottom-color: #9cf; box-shadow: inset 0 -1px #000; }
.sheet .active { position: relative; }
.active::before { content: ""; position: absolute; z-index: 1; inset: -2px -2px -2px -1px; border: 2px solid #217346; background: #fff; }
.active::after { content: ""; position: absolute; z-index: 2; right: -3px; bottom: -3px; width: 5px; height: 5px; background: #217346; border: solid #fff; border-width: 1px 0 0 1px; }
.cursor { position: absolute; z-index: 2; left: 2px; bottom: 2px; width: 1px; height: 16px; background: #000; }
.sheet .heads td { background: #9cf; border-color: #9cf; border-bottom-width: 0; box-shadow: inset 1px 0 #000, inset -1px 0 #000; text-align: center; vertical-align: bottom; white-space: normal; font-size: 13px; line-height: 17px; font-weight: 700; color: #001030; }
.sheet .heads .h18 td { box-shadow: inset 1px 0 #000, inset -1px 0 #000, inset 0 1px #000; }
.sheet .heads .h20 td { border-bottom: 1px solid #777; padding-bottom: 1px; box-shadow: inset 1px 0 #000, inset -1px 0 #000, inset 0 -1px #000; }
.heads .h20 th { border-bottom-color: #888; }
.data tr { height: 20px; }
.data td { border-color: #000; }
.data tr:first-child td { box-shadow: inset 0 1px #000; }
.data td:nth-child(n+11) { text-align: right; }
.sub td { font-weight: 700; }

.vscroll { flex: none; width: 21px; display: flex; flex-direction: column; align-items: center; padding: 2px 3px 0; background: linear-gradient(#f1f1f1, #f1f1f1) 3px 30px / 15px 100% no-repeat; }
.arrow { flex: none; width: 15px; height: 15px; border: 1px solid #ababab; background: #fff; display: flex; align-items: center; justify-content: center; }
.thumb { background: #fff; border: 1px solid #ababab; }
.vscroll .thumb { width: 15px; height: 17px; }
.end { margin-top: auto; }

.sheetbar { flex: none; display: flex; height: 27px; background: #f4f4f4; }
.nav { width: 28px; }
.nav:first-child { margin-left: 15px; }
.sheettab { width: 52px; height: 25px; margin: -1px 32px 0 29px; background: #fff; border: 1px solid #ababab; border-top: 0; border-bottom: 2px solid #217346; color: #217346; font-weight: 700; font-size: 12px; }
.hside { flex: 0 1 576px; margin-left: auto; display: flex; align-items: center; padding-right: 24px; }
.hscroll { flex: 1; display: flex; margin-left: 14px; background: #e9e9e9; }
.hscroll .thumb { width: 18px; height: 15px; margin-left: -1px; }
.hscroll .end { margin: 0 0 0 auto; }

/* Status bar */
.status { flex: none; display: flex; justify-content: space-between; align-items: center; height: 23px; padding: 0 9px 0 7px; background: #217346; color: #fff; font-size: 11px; }
.views { display: flex; align-items: center; height: 100%; }
.view { width: 38px; height: 100%; display: flex; align-items: center; justify-content: center; }
.view.on { background: #0a6332; }
.zoom { margin: 0 5px; }
.slider { appearance: none; width: 100px; height: 14px; margin: 0; background: linear-gradient(#fff, #fff) center / 100% 1px no-repeat; }
.slider::-webkit-slider-thumb { appearance: none; width: 4px; height: 11px; background: #fff; border-radius: 0; }
.percent { margin-left: 9px; }

/* Taskbar */
.taskbar { flex: none; display: flex; align-items: center; gap: 2px; height: 39px; border-top: 1px solid #d5e1f0; background: linear-gradient(90deg, #8394ad 0, #8b9db7 50px, #a8bfdb 85px, #a8bfdb calc(100% - 240px), #a8bfdb calc(100% - 200px), #8193ab calc(100% - 165px), #7d8fa8); }
.start { width: 57px; padding-left: 9px; }
.app { width: 60px; height: 38px; display: flex; align-items: center; justify-content: center; }
.running { border: 1px solid #495669; border-radius: 3px; background: linear-gradient(90deg, #e4eaf2, #cdd8e6 60%, #edf2f8); box-shadow: inset 0 0 0 1px #f3f7fc; }
.tray { margin-left: auto; display: flex; align-items: center; gap: 9px; height: 100%; color: #fff; }
.tray .light { margin-right: 4px; }
.clock { margin: 0 -1px 0 7px; text-align: center; line-height: 17px; }
.peek { width: 14px; height: 100%; border: 1px solid #a9b7c8; background: linear-gradient(135deg, #4c5f7b, #8292a8 60%, #5b6d86); }
```
